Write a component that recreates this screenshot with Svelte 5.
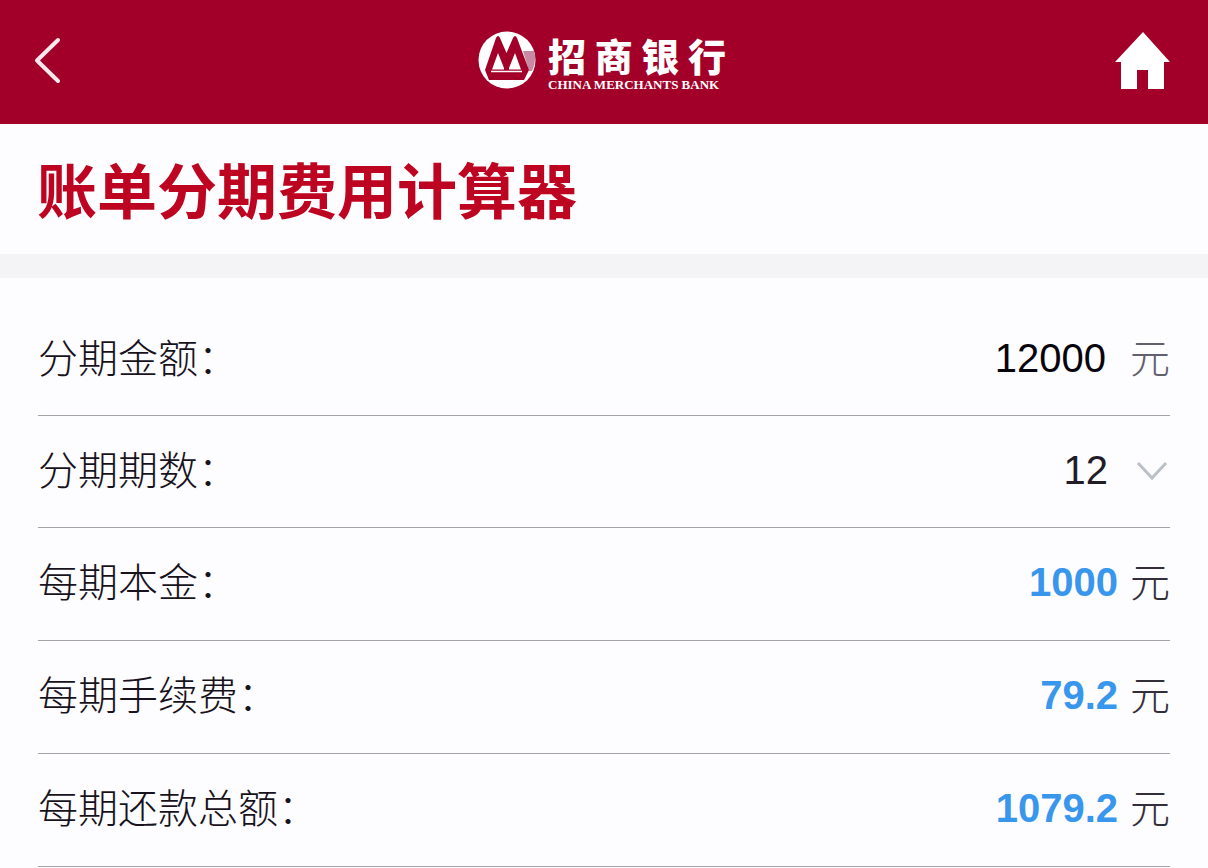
<script lang="ts">
  let amount = '12000';
  let periods = 12;
  const periodOptions = [3, 6, 12, 18, 24];
  const feeRate = 0.0066;

  function format(value: number): string {
    return String(Math.round(value * 100) / 100);
  }

  $: total = Number(amount) || 0;
  $: principal = total / periods;
  $: fee = total * feeRate;
  $: results = [
    { id: 'principal', label: '每期本金', value: format(principal) },
    { id: 'fee', label: '每期手续费', value: format(fee) },
    { id: 'total', label: '每期还款总额', value: format(principal + fee) }
  ];
</script>

<div class="page">
  <header class="topbar">
    <button class="icon-btn" aria-label="返回">
      <svg width="30" height="50" viewBox="0 0 30 50">
        <path d="M25 5 L4 25.500 L25 46" fill="none" stroke="#ffe9ef" stroke-width="4" stroke-linecap="round" stroke-linejoin="round" />
      </svg>
    </button>

    <div class="brand">
      <svg width="58" height="58" viewBox="0 0 58 58">
        <circle cx="29" cy="29" r="28.500" fill="#fff" />
        <path d="M45 20 H56 Q59 30 54 40 H51 Z" fill="#c78aa2" />
        <path d="M18 7 Q20 3 22 7 L28.500 22 L35 7 Q37 3 39 7 L51 39 L46 49 H11 L7 39 Z" fill="#a30029" />
        <path d="M20 22 L26 37 V38.500 H14 Z M37 22 L43 38.500 H31 V37 Z" fill="#fff" />
        <path d="M13 40.500 H44" stroke="#fff" stroke-width="1.500" />
      </svg>
      <div class="brand-text">
        <div class="brand-cn">
          <span>招</span><span>商</span><span>银</span><span>行</span>
        </div>
        <div class="brand-en">CHINA MERCHANTS BANK</div>
      </div>
    </div>

    <button class="icon-btn" aria-label="首页">
      <svg width="56" height="58" viewBox="0 0 56 58">
        <path d="M28 1 L55 31 H49 V58 H33 V39 H22 V58 H6 V31 H0 Z" fill="#fff" />
      </svg>
    </button>
  </header>

  <h1 class="title">账单分期费用计算器</h1>

  <form class="calculator" on:submit|preventDefault>
    <div class="row">
      <label for="amount">分期金额：</label>
      <input id="amount" type="text" inputmode="decimal" bind:value={amount} />
      <span class="unit muted">元</span>
    </div>

    <div class="row">
      <label for="periods">分期期数：</label>
      <select id="periods" bind:value={periods}>
        {#each periodOptions as option}
          <option value={option}>{option}</option>
        {/each}
      </select>
      <svg class="chevron" width="38" height="24" viewBox="0 0 38 24">
        <path d="M6 5 L20 20 L34 5" fill="none" stroke="#b9c0c7" stroke-width="3" />
      </svg>
    </div>

    {#each results as item (item.id)}
      <div class="row result">
        <label for={item.id}>{item.label}：</label>
        <output id={item.id}>{item.value}</output>
        <span class="unit">元</span>
      </div>
    {/each}
  </form>
</div>

<style>
  :global(body) {
    background: #fdfcfe;
  }

  .page {
    font-family: "Liberation Sans", "Noto Sans CJK SC", sans-serif;
    color: #17121c;
  }

  .topbar {
    display: grid;
    grid-template-columns: 1fr auto 1fr;
    align-items: center;
    height: 124px;
    padding: 0 37px 4px 33px;
    box-sizing: border-box;
    background: #a30029;
  }

  .icon-btn {
    display: flex;
    justify-self: start;
    padding: 0;
    border: none;
    background: none;
    cursor: pointer;
  }

  .icon-btn:last-child {
    justify-self: end;
  }

  .brand {
    display: flex;
    align-items: center;
    gap: 12px;
    color: #fff;
  }

  .brand-text {
    display: flex;
    flex-direction: column;
    min-width: 178px;
    padding-top: 6px;
  }

  .brand-cn {
    display: flex;
    justify-content: space-between;
    font-family: "Noto Sans CJK SC", sans-serif;
    font-size: 38px;
    font-weight: 900;
    line-height: 44px;
  }

  .brand-en {
    font-family: "Liberation Serif", serif;
    font-size: 13px;
    font-weight: 700;
    line-height: 16px;
    white-space: nowrap;
  }

  .title {
    margin: 0;
    padding: 24px 37px 26px;
    border-bottom: 24px solid #f4f3f5;
    font-family: "Noto Sans CJK SC", sans-serif;
    font-size: 60px;
    font-weight: 700;
    line-height: 80px;
    color: #bd0420;
  }

  .calculator {
    padding: 26px 38px 0;
  }

  .row {
    display: flex;
    align-items: center;
    height: 112px;
    padding-bottom: 4px;
    box-sizing: border-box;
    border-bottom: 1px solid #a3a5a9;
    font-size: 40px;
    line-height: 60px;
  }

  .row.result {
    height: 113px;
  }

  label,
  .unit {
    padding-bottom: 4px;
    font-family: "Noto Sans CJK SC", sans-serif;
    font-weight: 300;
  }

  label {
    flex: none;
  }

  input,
  select {
    flex: 1;
    min-width: 0;
    margin: 0 24px 0 0;
    padding: 0;
    border: none;
    outline: none;
    background: none;
    appearance: none;
    font: inherit;
    color: #08040c;
    text-align: right;
    text-align-last: right;
  }

  select {
    color: #211c28;
  }

  output {
    flex: 1;
    margin-right: 12px;
    font-weight: 700;
    text-align: right;
    color: #3897ed;
  }

  .unit {
    color: #332f3a;
  }

  .unit.muted {
    color: #62606e;
  }

  .chevron {
    flex: none;
  }
</style>
